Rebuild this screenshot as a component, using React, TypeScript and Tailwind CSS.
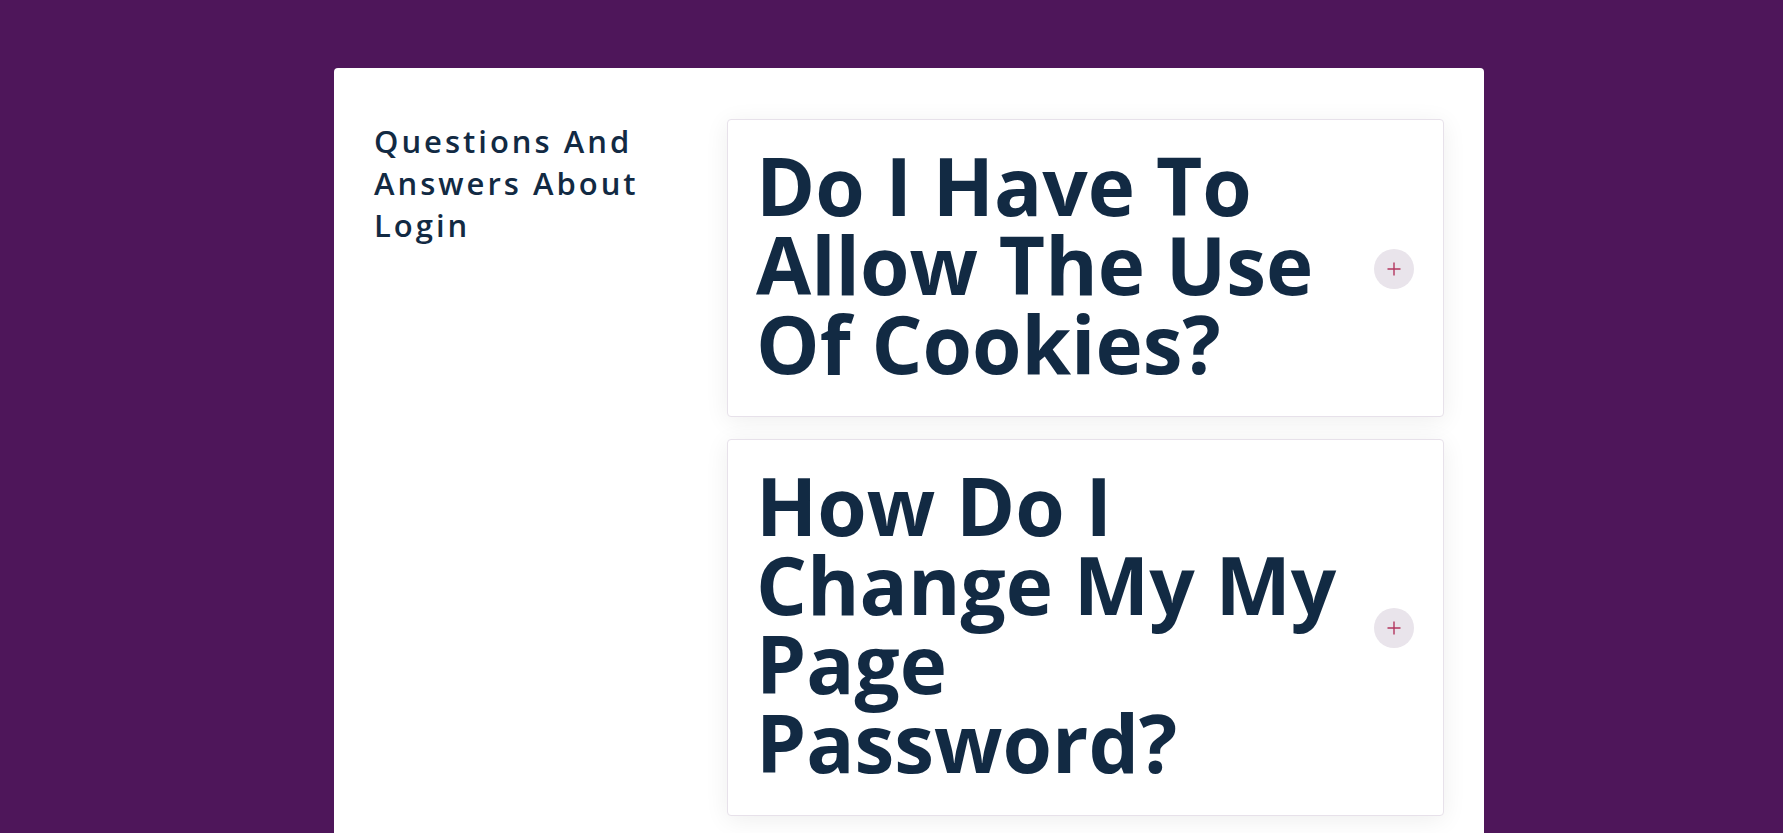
import React from "react";

const faqs = [
  { q: "Do I Have To Allow The Use Of Cookies?" },
  { q: "How Do I Change My My Page Password?" },
];

const PlusIcon = () => (
  <svg width="14" height="14" viewBox="0 0 14 14" fill="none">
    <path d="M7 0.5V13.5M0.5 7H13.5" stroke="#b3365f" strokeWidth="1.4" />
  </svg>
);

const FaqItem = ({ q }: { q: string }) => {
  return (
    <div className="flex items-center gap-5 rounded-[4px] border border-[#e7e1ea] bg-white pb-[29px] pl-[28px] pr-[29px] pt-[30px] shadow-[0_4px_24px_rgba(0,0,0,0.07)]">
      {/* text sits a bit high, button stays centred on the card */}
      <h3 className="-mt-[5px] mb-[5px] flex-1 text-[80px] font-bold leading-[79px] text-[#122a43]">
        {q}
      </h3>
      <button className="flex h-10 w-10 shrink-0 items-center justify-center rounded-full bg-[#e9e4eb]">
        <PlusIcon />
      </button>
    </div>
  );
};

export default function App() {
  return (
    <div
      className="min-h-screen overflow-hidden bg-[#4e165a] pt-[68px]"
      style={{ fontFamily: '"Open Sans", "Noto Sans", sans-serif' }}
    >
      <div className="ml-[334px] w-[1150px] rounded-t-[4px] bg-white px-10 pb-10 pt-[51px]">
        <div className="grid grid-cols-[321px_1fr] gap-8">
          <h2 className="mt-[1px] text-[31px] font-semibold leading-[42px] tracking-[3px] text-[#122a43]">
            Questions And Answers About Login
          </h2>
          <div className="flex flex-col gap-[22px]">
            {faqs.map((f) => (
              <FaqItem key={f.q} q={f.q} />
            ))}
          </div>
        </div>
      </div>
    </div>
  );
}
